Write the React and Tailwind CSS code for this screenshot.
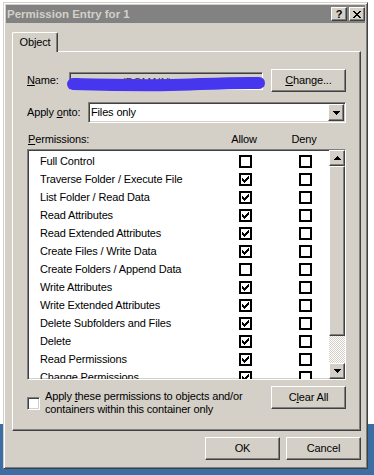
import React from 'react';

// classic 3D edges
const raised =
  'border border-t-white border-l-white border-r-[#404040] border-b-[#404040] shadow-[inset_-1px_-1px_#808080]';
const sunken =
  'border border-t-[#808080] border-l-[#808080] border-r-white border-b-white shadow-[inset_1px_1px_#404040,inset_-1px_-1px_#d4d0c8]';

// tiny pixel-art glyph from rows of '#' and '.'
function Pixels({ rows }) {
  const w = rows[0].length;
  const h = rows.length;
  return (
    <svg width={w} height={h} viewBox={`0 0 ${w} ${h}`} shapeRendering="crispEdges">
      {rows.map((r, y) =>
        r.split('').map((c, x) => (c === '#' ? <rect key={`${x}-${y}`} x={x} y={y} width="1" height="1" fill="#000" /> : null))
      )}
    </svg>
  );
}

const CHECK = ['......#', '.....##', '#...###', '##.###.', '#####..', '.###...', '..#....'];
const CROSS = ['##....##', '.##..##.', '..####..', '...##...', '..####..', '.##..##.', '##....##'];
const UP = ['...#...', '..###..', '.#####.', '#######'];
const DOWN = ['#######', '.#####.', '..###..', '...#...'];

const perms = [
  ['Full Control', false],
  ['Traverse Folder / Execute File', true],
  ['List Folder / Read Data', true],
  ['Read Attributes', true],
  ['Read Extended Attributes', true],
  ['Create Files / Write Data', true],
  ['Create Folders / Append Data', false],
  ['Write Attributes', true],
  ['Write Extended Attributes', true],
  ['Delete Subfolders and Files', true],
  ['Delete', true],
  ['Read Permissions', true],
  ['Change Permissions', true],
  ['Take Ownership', true],
];

function Box({ checked }) {
  return (
    <div className="w-[13px] h-[13px] border-2 border-black bg-white flex items-start justify-start p-px">
      {checked && <Pixels rows={CHECK} />}
    </div>
  );
}

function Button({ children, className = '' }) {
  return (
    <button className={`${raised} bg-[#d4d0c8] w-[75px] h-[23px] flex items-center justify-center text-black ${className}`}>
      {children}
    </button>
  );
}

function ArrowButton({ rows, className = '' }) {
  return (
    <div className={`${raised} bg-[#d4d0c8] w-[16px] flex items-center justify-center ${className}`}>
      <Pixels rows={rows} />
    </div>
  );
}

export default function App() {
  return (
    <div className="w-[374px] h-[475px] overflow-hidden pt-[2px] pl-[3px] bg-[linear-gradient(to_bottom,#ffffff_0,#ffffff_424px,#3a6ea5_424px)] font-['Liberation_Sans',Arial,sans-serif] text-[11px] leading-[13px] tracking-[-0.15px] text-black">
      {/* dialog window */}
      <div className="w-[365px] h-[467px] bg-[#d4d0c8] border border-t-[#d4d0c8] border-l-[#d4d0c8] border-r-[#404040] border-b-[#404040] shadow-[inset_1px_1px_#ffffff,inset_-1px_-1px_#808080] p-[2px] flex flex-col">
        {/* title bar (inactive) */}
        <div className="h-[18px] bg-[#828282] flex items-center pl-[1px]">
          <span className="flex-1 text-[11.5px] font-bold tracking-normal text-[#d4d0c8]">Permission Entry for 1</span>
          <div className="flex gap-[2px]">
            <div className={`${raised} bg-[#d4d0c8] w-[16px] h-[14px] flex items-center justify-center text-[11px] font-bold leading-none`}>?</div>
            <div className={`${raised} bg-[#d4d0c8] w-[16px] h-[14px] flex items-center justify-center`}>
              <Pixels rows={CROSS} />
            </div>
          </div>
        </div>

        <div className="pl-[6px] pt-[9px]">
          {/* tab */}
          <div className="relative z-10 -mb-px w-[46px] h-[20px] bg-[#d4d0c8] border-t border-l border-r border-t-white border-l-white border-r-[#404040] shadow-[inset_-1px_0_#808080] rounded-t-[2px] flex items-center justify-center pb-[1px]">
            Object
          </div>

          {/* tab panel */}
          <div className={`${raised} w-[349px] h-[380px] pl-[14px] pt-[17px] flex flex-col`}>
            {/* Name row */}
            <div className="flex items-center h-[23px]">
              <span className="w-[42px]">
                <u>N</u>ame:
              </span>
              <div className={`${sunken} relative w-[194px] h-[18px] bg-[#d4d0c8] flex items-center pl-[3px] text-[#333]`}>
                <span className="pt-[3px]">Someone (DOMAIN\someone)</span>
                <svg className="absolute left-0 top-0 overflow-visible" width="194" height="18" viewBox="0 0 194 18">
                  <path d="M3 11 C 40 12, 80 13, 120 11.5 S 170 9.5, 189 10" stroke="#4637ef" strokeWidth="12" strokeLinecap="round" fill="none" />
                </svg>
              </div>
              <Button className="ml-[8px]">
                <span>
                  <u>C</u>hange...
                </span>
              </Button>
            </div>

            {/* Apply onto row */}
            <div className="flex items-center h-[21px] mt-[10px]">
              <span className="w-[61px]">
                Apply <u>o</u>nto:
              </span>
              <div className={`${sunken} w-[258px] h-[21px] bg-white flex items-center pl-[2px] pr-[1px]`}>
                <span className="flex-1">Files only</span>
                <ArrowButton rows={DOWN} className="h-[17px]" />
              </div>
            </div>

            {/* headers */}
            <div className="flex h-[13px] mt-[10px] w-[319px] pl-[1px]">
              <span className="flex-1">
                <u>P</u>ermissions:
              </span>
              <span className="w-[40px] text-center">Allow</span>
              <span className="w-[20px]" />
              <span className="w-[40px] text-center">Deny</span>
              <span className="w-[22px]" />
            </div>

            {/* permission list */}
            <div className={`${sunken} mt-[3px] w-[319px] h-[231px] bg-white flex`}>
              <div className="flex-1 overflow-hidden pt-[2px]">
                {perms.map(([name, allow]) => (
                  <div key={name} className="flex items-center h-[18px]">
                    <span className="flex-1 pl-[12px] whitespace-nowrap">{name}</span>
                    <div className="w-[40px] flex justify-center">
                      <Box checked={allow} />
                    </div>
                    <span className="w-[20px]" />
                    <div className="w-[40px] flex justify-center">
                      <Box checked={false} />
                    </div>
                    <span className="w-[4px]" />
                  </div>
                ))}
              </div>
              {/* scrollbar */}
              <div className="w-[16px] flex flex-col">
                <ArrowButton rows={UP} className="h-[16px]" />
                <div className={`${raised} bg-[#d4d0c8] h-[170px]`} />
                <div className="flex-1 bg-[repeating-conic-gradient(#d4d0c8_0_25%,#ffffff_0_50%)] bg-[length:2px_2px]" />
                <ArrowButton rows={DOWN} className="h-[16px]" />
              </div>
            </div>

            {/* apply checkbox + clear all */}
            <div className="flex items-start mt-[6px] w-[319px]">
              <div className="flex-1 flex items-center mt-[4px]">
                <div className={`${sunken} w-[13px] h-[13px] bg-white shrink-0`} />
                <div className="ml-[5px] flex flex-col">
                  <span>
                    Apply <u>t</u>hese permissions to objects and/or
                  </span>
                  <span>containers within this container only</span>
                </div>
              </div>
              <Button>
                <span>
                  C<u>l</u>ear All
                </span>
              </Button>
            </div>
          </div>

          {/* dialog buttons */}
          <div className="flex justify-end gap-[6px] mt-[6px] pr-[4px]">
            <Button>OK</Button>
            <Button>Cancel</Button>
          </div>
        </div>
      </div>
    </div>
  );
}
